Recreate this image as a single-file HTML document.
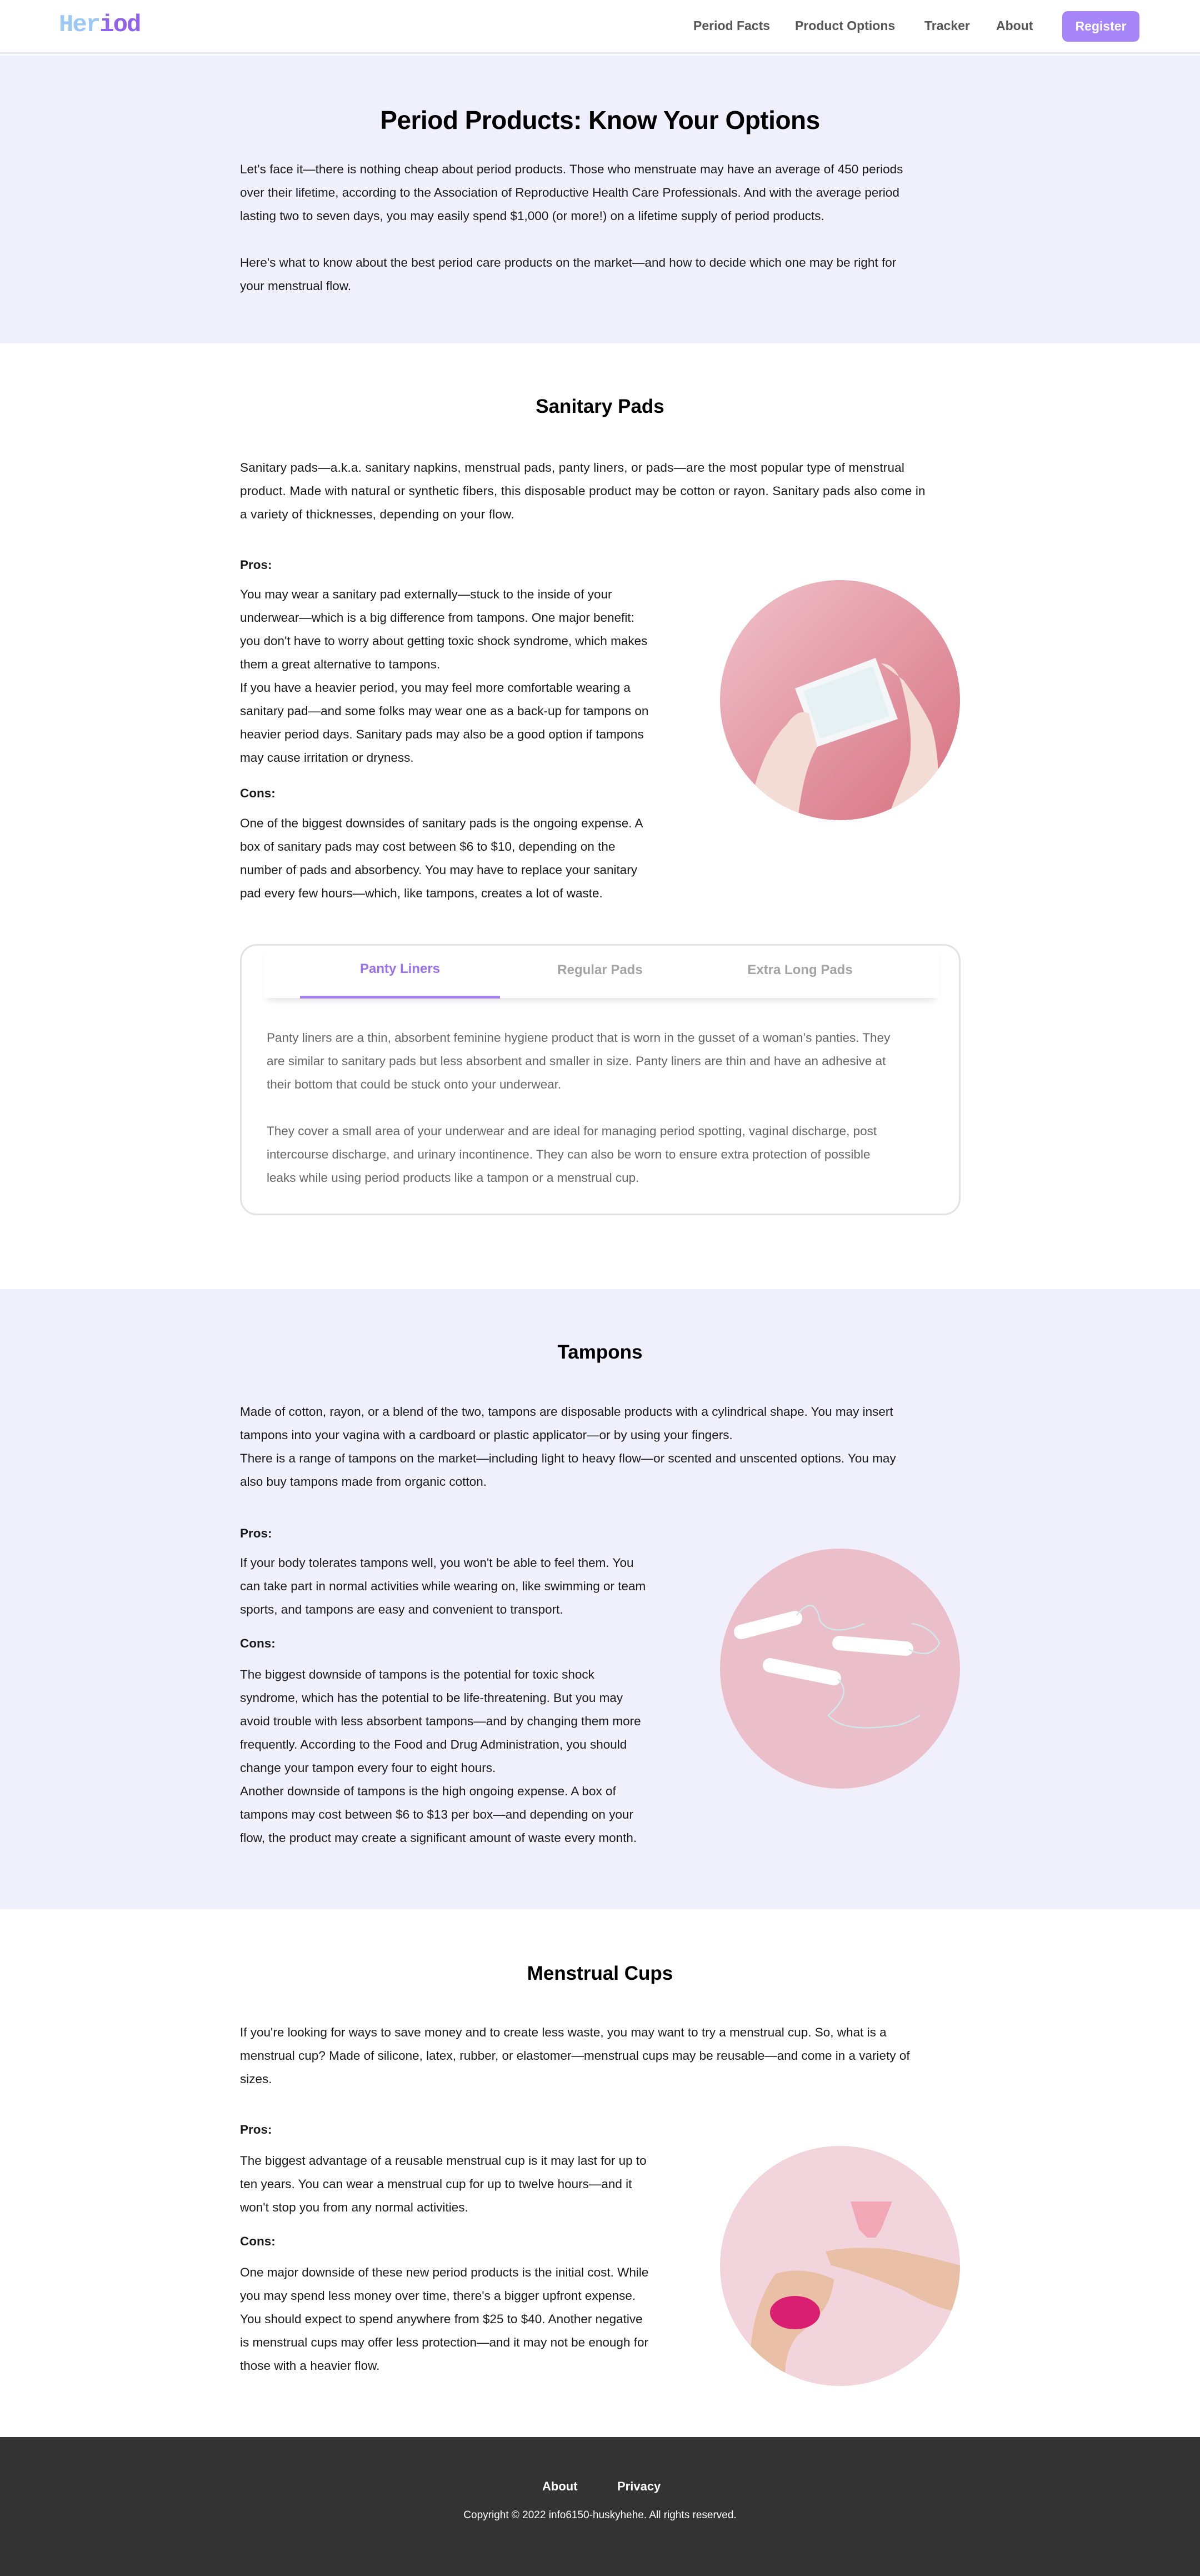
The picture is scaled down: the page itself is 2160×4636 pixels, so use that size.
<!DOCTYPE html>
<html><head><meta charset="utf-8"><style>
*{margin:0;padding:0;box-sizing:border-box}
body{width:2160px;height:4636px;position:relative;background:#fff;font-family:"Liberation Sans",sans-serif;color:#1a1a1a;overflow:hidden}
.abs{position:absolute}
.nav{left:0;top:0;width:2160px;height:97px;background:#fff;border-bottom:3px solid #e6e6ee}
.logo{left:106px;top:20px;font-family:"Liberation Mono",monospace;font-weight:bold;font-size:44px;letter-spacing:-2px}
.nl{top:33px;font-size:23px;font-weight:bold;color:#555;white-space:nowrap}
.reg{left:1912px;top:20px;width:139px;height:55px;background:#a685f8;border-radius:10px;color:#fff;font-weight:bold;font-size:23px;text-align:center;line-height:55px}
.lav{background:#f0f0fd;left:0;width:2160px}
h1,h2{position:absolute;left:0;width:2160px;text-align:center;font-weight:bold;color:#000}
h1{font-size:46px;letter-spacing:-0.5px}
h2{font-size:35px}
.t{position:absolute;left:432px;font-size:22.5px;line-height:42px;white-space:nowrap;color:#1a1a1a}
.b{position:absolute;left:432px;font-size:22.5px;font-weight:bold;line-height:42px}
.circ{position:absolute;left:1296px;width:432px;height:432px;border-radius:50%;overflow:hidden}
.card{left:432px;top:1699px;width:1297px;height:488px;border:3px solid #e2e2e2;border-radius:30px}
.tabbar{left:475px;top:1700px;width:1215px;height:96px;box-shadow:0 10px 12px -6px rgba(0,0,0,.12)}
.tab{top:1732px;width:360px;text-align:center;font-size:24px;font-weight:bold;color:#a3a3a3}
.ct{position:absolute;left:480px;font-size:22.5px;line-height:42px;color:#666;white-space:nowrap}
.foot{left:0;top:4386px;width:2160px;height:250px;background:#333}
</style></head><body>
<div class="abs nav"></div>
<div class="abs logo"><span style="color:#9cc8f8">Her</span><span style="color:#9161ec">iod</span></div>
<div class="abs nl" style="left:1248px">Period Facts</div>
<div class="abs nl" style="left:1431px">Product Options</div>
<div class="abs nl" style="left:1664px">Tracker</div>
<div class="abs nl" style="left:1793px">About</div>
<div class="abs reg">Register</div>

<div class="abs lav" style="top:100px;height:518px"></div>
<h1 style="top:189px">Period Products: Know Your Options</h1>
<div class="t" style="top:284px">Let's face it—there is nothing cheap about period products. Those who menstruate may have an average of 450 periods<br>over their lifetime, according to the Association of Reproductive Health Care Professionals. And with the average period<br>lasting two to seven days, you may easily spend $1,000 (or more!) on a lifetime supply of period products.</div>
<div class="t" style="top:452px">Here's what to know about the best period care products on the market—and how to decide which one may be right for<br>your menstrual flow.</div>

<h2 style="top:712px">Sanitary Pads</h2>
<div class="t" style="top:821px;letter-spacing:0.2px">Sanitary pads—a.k.a. sanitary napkins, menstrual pads, panty liners, or pads—are the most popular type of menstrual<br>product. Made with natural or synthetic fibers, this disposable product may be cotton or rayon. Sanitary pads also come in<br>a variety of thicknesses, depending on your flow.</div>
<div class="b" style="top:996px">Pros:</div>
<div class="t" style="top:1049px">You may wear a sanitary pad externally—stuck to the inside of your<br>underwear—which is a big difference from tampons. One major benefit:<br>you don't have to worry about getting toxic shock syndrome, which makes<br>them a great alternative to tampons.<br>If you have a heavier period, you may feel more comfortable wearing a<br>sanitary pad—and some folks may wear one as a back-up for tampons on<br>heavier period days. Sanitary pads may also be a good option if tampons<br>may cause irritation or dryness.</div>
<div class="b" style="top:1407px">Cons:</div>
<div class="t" style="top:1461px">One of the biggest downsides of sanitary pads is the ongoing expense. A<br>box of sanitary pads may cost between $6 to $10, depending on the<br>number of pads and absorbency. You may have to replace your sanitary<br>pad every few hours—which, like tampons, creates a lot of waste.</div>
<div class="circ" style="top:1044px">
<svg width="432" height="432" viewBox="0 0 432 432"><defs><linearGradient id="g1" x1="0" y1="0" x2="1" y2="1"><stop offset="0" stop-color="#f0c3cc"/><stop offset="1" stop-color="#d7707f"/></linearGradient></defs>
<rect width="432" height="432" fill="url(#g1)"/>
<path d="M135 195 L280 140 L320 250 L175 300 Z" fill="#f4f6f7"/>
<path d="M150 200 L275 155 L305 245 L180 285Z" fill="#e6f1f3"/>
<path d="M60 380 Q80 300 120 260 Q140 230 160 240 L175 300 Q150 340 140 432 L80 432Z" fill="#f3dcd3"/>
<path d="M290 150 Q320 150 330 200 Q350 280 340 330 L300 432 L390 432 Q400 330 380 260 Q360 220 330 180Z" fill="#f3dcd3"/>
</svg></div>

<div class="abs card"></div>
<div class="abs tabbar"></div>
<div class="abs" style="left:540px;top:1792px;width:360px;height:5px;background:#a280ee"></div>
<div class="abs tab" style="left:540px;top:1730px;color:#9a6ff0">Panty Liners</div>
<div class="abs tab" style="left:900px">Regular Pads</div>
<div class="abs tab" style="left:1260px">Extra Long Pads</div>
<div class="ct" style="top:1847px">Panty liners are a thin, absorbent feminine hygiene product that is worn in the gusset of a woman’s panties. They<br>are similar to sanitary pads but less absorbent and smaller in size. Panty liners are thin and have an adhesive at<br>their bottom that could be stuck onto your underwear.</div>
<div class="ct" style="top:2015px">They cover a small area of your underwear and are ideal for managing period spotting, vaginal discharge, post<br>intercourse discharge, and urinary incontinence. They can also be worn to ensure extra protection of possible<br>leaks while using period products like a tampon or a menstrual cup.</div>

<div class="abs lav" style="top:2320px;height:1116px"></div>
<h2 style="top:2414px">Tampons</h2>
<div class="t" style="top:2520px">Made of cotton, rayon, or a blend of the two, tampons are disposable products with a cylindrical shape. You may insert<br>tampons into your vagina with a cardboard or plastic applicator—or by using your fingers.<br>There is a range of tampons on the market—including light to heavy flow—or scented and unscented options. You may<br>also buy tampons made from organic cotton.</div>
<div class="b" style="top:2739px">Pros:</div>
<div class="t" style="top:2792px">If your body tolerates tampons well, you won't be able to feel them. You<br>can take part in normal activities while wearing on, like swimming or team<br>sports, and tampons are easy and convenient to transport.</div>
<div class="b" style="top:2937px">Cons:</div>
<div class="t" style="top:2993px">The biggest downside of tampons is the potential for toxic shock<br>syndrome, which has the potential to be life-threatening. But you may<br>avoid trouble with less absorbent tampons—and by changing them more<br>frequently. According to the Food and Drug Administration, you should<br>change your tampon every four to eight hours.<br>Another downside of tampons is the high ongoing expense. A box of<br>tampons may cost between $6 to $13 per box—and depending on your<br>flow, the product may create a significant amount of waste every month.</div>
<div class="circ" style="top:2787px;background:#ebbfc9">
<svg width="432" height="432" viewBox="0 0 432 432">
<g stroke="#fff" stroke-linecap="round" fill="none">
<line x1="38" y1="150" x2="135" y2="125" stroke-width="26"/>
<line x1="90" y1="210" x2="205" y2="233" stroke-width="26"/>
<line x1="215" y1="170" x2="335" y2="180" stroke-width="26"/>
</g>
<g stroke="#cfe8ec" stroke-width="2.5" fill="none">
<path d="M138 120 Q170 80 180 130 Q200 160 260 135"/>
<path d="M212 235 Q240 260 195 300 Q220 330 300 320 Q330 320 360 300"/>
<path d="M340 182 Q380 200 395 170 Q380 140 345 135"/>
</g></svg></div>

<h2 style="top:3532px">Menstrual Cups</h2>
<div class="t" style="top:3637px">If you're looking for ways to save money and to create less waste, you may want to try a menstrual cup. So, what is a<br>menstrual cup? Made of silicone, latex, rubber, or elastomer—menstrual cups may be reusable—and come in a variety of<br>sizes.</div>
<div class="b" style="top:3812px">Pros:</div>
<div class="t" style="top:3868px">The biggest advantage of a reusable menstrual cup is it may last for up to<br>ten years. You can wear a menstrual cup for up to twelve hours—and it<br>won't stop you from any normal activities.</div>
<div class="b" style="top:4013px">Cons:</div>
<div class="t" style="top:4069px">One major downside of these new period products is the initial cost. While<br>you may spend less money over time, there's a bigger upfront expense.<br>You should expect to spend anywhere from $25 to $40. Another negative<br>is menstrual cups may offer less protection—and it may not be enough for<br>those with a heavier flow.</div>
<div class="circ" style="top:3862px;background:#f2d5dc">
<svg width="432" height="432" viewBox="0 0 432 432">
<path d="M190 190 Q230 180 300 185 Q360 195 432 215 L432 300 Q380 290 330 260 Q260 230 200 215Z" fill="#e9bfa6"/>
<path d="M235 100 L310 100 L290 150 L280 165 L265 165 L250 150Z" fill="#f2a7b7"/>
<path d="M55 410 Q50 300 100 230 Q150 215 205 240 Q200 300 140 340 Q110 380 120 432 L70 432Z" fill="#e9bfa6"/>
<ellipse cx="135" cy="300" rx="45" ry="30" fill="#d81f72"/>
</svg></div>

<div class="abs foot"></div>
<div class="abs" style="left:976px;top:4462px;font-size:22px;font-weight:bold;color:#fff">About</div>
<div class="abs" style="left:1111px;top:4462px;font-size:22px;font-weight:bold;color:#fff">Privacy</div>
<div class="abs" style="left:0;width:2160px;text-align:center;top:4516px;font-size:19px;color:#fff">Copyright © 2022 info6150-huskyhehe. All rights reserved.</div>
</body></html>
